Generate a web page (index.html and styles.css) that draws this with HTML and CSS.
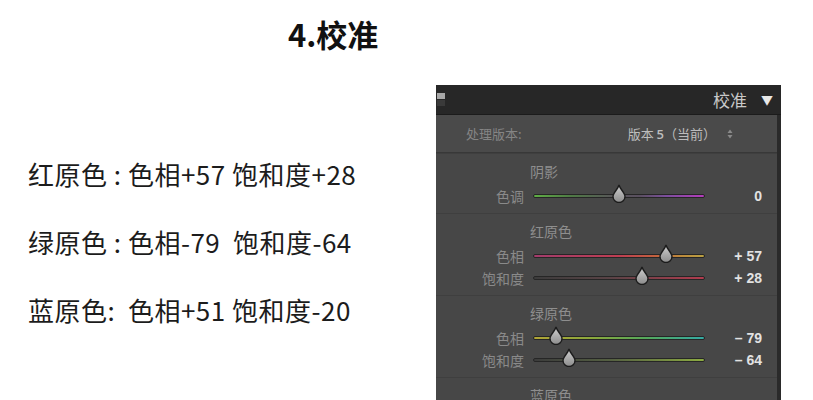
FILE: index.html
```html
<!DOCTYPE html>
<html lang="zh-CN">
<head>
    <meta charset="UTF-8">
    <meta name="viewport" content="width=device-width, initial-scale=1.0">
    <title>4.校准</title>
    <link rel="stylesheet" href="styles.css">
</head>
<body>
    <svg class="defs" width="0" height="0">
        <defs>
            <linearGradient id="thumbFill" x1="0" y1="0" x2="0" y2="1">
                <stop offset="0" stop-color="#d0d0d0"/>
                <stop offset="1" stop-color="#8c8c8c"/>
            </linearGradient>
            <symbol id="thumb" viewBox="0 0 14 19">
                <path d="M7 1 C8 5 13 9 13 12.5 A6 6 0 0 1 1 12.5 C1 9 6 5 7 1 Z" fill="url(#thumbFill)" stroke="#1c1c1c" stroke-width="1.4"/>
            </symbol>
        </defs>
    </svg>

    <h1 class="title">4.校准</h1>

    <div class="content">
        <div class="notes">
            <p class="note">红原色 : 色相+57 饱和度+28</p>
            <p class="note">绿原色 : 色相-79  饱和度-64</p>
            <p class="note">蓝原色:  色相+51 饱和度-20</p>
        </div>

        <div class="panel">
            <div class="panel-head">
                <span class="panel-grip"></span>
                <span class="panel-title">校准</span>
                <span class="panel-arrow">▼</span>
            </div>
            <div class="panel-body">
                <div class="process-row">
                    <span class="process-label">处理版本:</span>
                    <span class="process-value">版本 <b>5</b>（当前）</span>
                    <svg class="stepper" width="6" height="10" viewBox="0 0 6 10">
                        <path d="M3 0.5 L5.5 4 H0.5 Z M3 9.5 L5.5 6 H0.5 Z" fill="#8a8a8a"/>
                    </svg>
                </div>

                <div class="group">
                    <div class="group-title">阴影</div>
                    <div class="slider-row">
                        <span class="slider-label">色调</span>
                        <div class="track track-tint">
                            <svg class="thumb" style="left: 50%"><use href="#thumb"/></svg>
                        </div>
                        <span class="slider-value">0</span>
                    </div>
                </div>

                <div class="group">
                    <div class="group-title">红原色</div>
                    <div class="slider-row">
                        <span class="slider-label">色相</span>
                        <div class="track track-red-hue">
                            <svg class="thumb" style="left: 77.5%"><use href="#thumb"/></svg>
                        </div>
                        <span class="slider-value">+ 57</span>
                    </div>
                    <div class="slider-row">
                        <span class="slider-label">饱和度</span>
                        <div class="track track-red-sat">
                            <svg class="thumb" style="left: 63.5%"><use href="#thumb"/></svg>
                        </div>
                        <span class="slider-value">+ 28</span>
                    </div>
                </div>

                <div class="group">
                    <div class="group-title">绿原色</div>
                    <div class="slider-row">
                        <span class="slider-label">色相</span>
                        <div class="track track-green-hue">
                            <svg class="thumb" style="left: 13%"><use href="#thumb"/></svg>
                        </div>
                        <span class="slider-value">&ndash; 79</span>
                    </div>
                    <div class="slider-row">
                        <span class="slider-label">饱和度</span>
                        <div class="track track-green-sat">
                            <svg class="thumb" style="left: 20.5%"><use href="#thumb"/></svg>
                        </div>
                        <span class="slider-value">&ndash; 64</span>
                    </div>
                </div>

                <div class="group">
                    <div class="group-title">蓝原色</div>
                    <div class="slider-row">
                        <span class="slider-label">色相</span>
                        <div class="track track-blue-hue">
                            <svg class="thumb" style="left: 75.5%"><use href="#thumb"/></svg>
                        </div>
                        <span class="slider-value">+ 51</span>
                    </div>
                </div>
            </div>
        </div>
    </div>
</body>
</html>
```

FILE: styles.css
```css
html, body {
    height: 400px;
    overflow: hidden;
}

body {
    margin: 0;
    background-color: #fff;
    color: #1c1c1c;
    font-family: "Noto Sans CJK SC", "Noto Sans", sans-serif;
}

.defs {
    position: absolute;
}

.title {
    margin: 0;
    padding: 14px 0 31px 288px;
    font-size: 31px;
    line-height: 40px;
    font-weight: bold;
    color: #111;
}

.content {
    display: flex;
    align-items: flex-start;
}

/* left column with the three values */
.notes {
    width: 408px;
    padding: 55px 0 0 28px;
}

.note {
    margin: 0;
    font-size: 26px;
    line-height: 68px;
    letter-spacing: 0.5px;
    white-space: pre;
}

/* lightroom style panel */
.panel {
    width: 345px;
    font-family: "Noto Sans CJK SC", sans-serif;
}

.panel-head {
    display: flex;
    align-items: center;
    height: 29px;
    padding-right: 8px;
    background-color: #272727;
    border-bottom: 1px solid #1b1b1b;
}

.panel-grip {
    width: 8px;
    height: 6px;
    margin: -8px 0 0 1px;
    background-color: #a8a8a8;
    box-shadow: 0 7px 0 #3a3a3a;
}

.panel-title {
    margin-left: auto;
    font-size: 17px;
    color: #c9c9c9;
}

.panel-arrow {
    margin-left: 14px;
    font-size: 12px;
    color: #e8e8e8;
}

.panel-body {
    background-color: #474747;
    border-right: 4px solid #2a2a2a;
}

.process-row {
    display: flex;
    align-items: center;
    height: 37px;
    padding: 0 44px 0 30px;
    background-color: #4a4a4a;
    border-bottom: 1px solid #383838;
    font-size: 13px;
}

.process-label {
    color: #858585;
}

.process-value {
    margin-left: auto;
    color: #bdbdbd;
}

.process-value b {
    font-family: "Open Sans", sans-serif;
    font-weight: 600;
}

.stepper {
    margin-left: 11px;
}

.group {
    padding: 8px 0 6px;
    border-top: 1px solid #3f3f3f;
}

.group:first-of-type {
    border-top: none;
}

.group-title {
    padding-left: 94px;
    height: 18px;
    line-height: 18px;
    font-size: 14px;
    color: #8e8e8e;
    margin-bottom: 5px;
}

.slider-row {
    display: grid;
    grid-template-columns: 88px 172px 48px;
    column-gap: 9px;
    align-items: center;
    height: 22px;
}

.slider-label {
    text-align: right;
    font-size: 14px;
    color: #8a8a8a;
}

.slider-value {
    text-align: right;
    font-family: "Liberation Sans", sans-serif;
    font-weight: bold;
    font-size: 14px;
    color: #e2e2e2;
}

.track {
    position: relative;
    height: 2px;
    border: 1px solid #262626;
    border-radius: 2px;
}

.thumb {
    position: absolute;
    top: -11px;
    width: 14px;
    height: 19px;
    margin-left: -7px;
}

.track-tint {
    background: linear-gradient(90deg, #5fae45 0%, #4f7a45 22%, #585858 45%, #5a5060 62%, #7d4f9e 78%, #b43cbc 100%);
}

.track-red-hue {
    background: linear-gradient(90deg, #a33c6c 0%, #bf3e52 50%, #c2623e 72%, #bd8a3c 86%, #b9a043 100%);
}

.track-red-sat {
    background: linear-gradient(90deg, #3c3c3c 0%, #5a4346 45%, #b23c4e 100%);
}

.track-green-hue {
    background: linear-gradient(90deg, #b0a436 0%, #8aa83c 35%, #55a85a 65%, #34aaa4 100%);
}

.track-green-sat {
    background: linear-gradient(90deg, #3c3c3c 0%, #556042 45%, #8cab42 100%);
}

.track-blue-hue {
    background: linear-gradient(90deg, #3aa8b0 0%, #4a70c0 50%, #8a4ab8 100%);
}
```
